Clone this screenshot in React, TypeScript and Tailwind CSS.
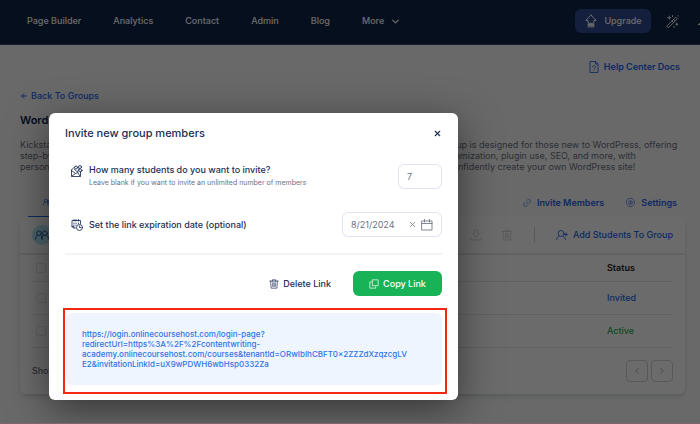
import { useState } from "react";
import type { ReactNode } from "react";
import { FiArrowLeft, FiChevronDown, FiChevronLeft, FiChevronRight, FiX } from "react-icons/fi";

type TIconProps = {
  className?: string;
  children: ReactNode;
};

// shared wrapper for the outline icons, drawn on a 24px grid
const Icon = ({ className = "size-3", children }: TIconProps) => (
  <svg
    className={className}
    viewBox="0 0 24 24"
    fill="none"
    stroke="currentColor"
    strokeWidth={1.7}
    strokeLinecap="round"
    strokeLinejoin="round"
    aria-hidden="true"
  >
    {children}
  </svg>
);

const TrashIcon = ({ className }: { className?: string }) => (
  <Icon className={className}>
    <path d="M2 5h20M8 5V2h8v3M4 5l1 17h14l1-17M9 9v9M12 9v9M15 9v9" />
  </Icon>
);

const UserIcon = ({ className }: { className?: string }) => (
  <Icon className={className}>
    <circle cx="10" cy="9" r="6" />
    <path d="M1 21c1-4 3-6 5-7M19 21c-1-4-3-6-5-7M20 8v6M17 11h6" />
  </Icon>
);

const UsersIcon = ({ className }: { className?: string }) => (
  <Icon className={className}>
    <circle cx="7" cy="9" r="4" />
    <circle cx="17" cy="9" r="4" />
    <path d="M1 19c0-3 1-5 3-7M12 19c0-3-1-5-2-7M12 19c0-3 1-5 2-7M23 19c0-3-1-5-3-7" />
  </Icon>
);

const navItems = ["Page Builder", "Analytics", "Contact", "Admin", "Blog"];

const students = [
  { id: 1, name: "Emma Carter", status: "Invited", color: "text-[#2563eb]" },
  { id: 2, name: "Noah Miller", status: "Active", color: "text-[#16b455]" },
];

const inviteUrl =
  "https://login.onlinecoursehost.com/login-page?redirectUrl=https%3A%2F%2Fcontentwriting-academy.onlinecoursehost.com/courses&tenantId=ORwIbIhCBFT0x2ZZZdXzqzcgLVE2&invitationLinkId=uX9wPDWH6wbHsp0332Za";

const Navbar = () => (
  <nav className="flex h-[45px] items-center overflow-hidden whitespace-nowrap border-b border-[#3b4a60] bg-[#0e2446] pb-0.5 pl-[27px] text-[9px] font-medium text-white">
    <div className="flex shrink-0 items-center gap-8">
      {navItems.map((item) => (
        <a key={item} href="#">
          {item}
        </a>
      ))}
      <button className="flex items-center gap-1.5">
        More
        <FiChevronDown size={11} strokeWidth={3} />
      </button>
    </div>
    <div className="-mr-3 ml-auto flex shrink-0 items-center gap-[15px]">
      <button className="flex h-6 w-[76px] items-center justify-center gap-1.5 rounded-md bg-[#2f4b8f]">
        <Icon className="size-3.5">
          <path d="M12 2 3 11h4v5h10v-5h4L12 2ZM7 18h10M7 20h10M7 22h10" />
        </Icon>
        Upgrade
      </button>
      <button aria-label="Customize">
        <Icon className="size-[13px]">
          <path d="m2 20 12-12 3 3L5 23ZM14 8l4-4 3 3-4 4M11 11l3 3M6 2v6M3 5h6M20 15v4M18 17h4M12 1v2M15 21v2M22 1v1" />
        </Icon>
      </button>
      <button aria-label="Notifications" className="ml-1">
        <Icon className="size-3.5">
          <path d="M1 18h22l-4-4v-4a7 7 0 0 0-14 0v4l-4 4ZM10 22h4" />
        </Icon>
      </button>
    </div>
  </nav>
);

const GroupPage = () => (
  <div className="pb-[29px] pl-5 pr-[15px]">
    <div className="flex h-11 items-center justify-end pr-[5px]">
      <a href="#" className="flex items-center gap-1 text-[9px] font-semibold text-[#2563eb]">
        <Icon>
          <path d="M15 1H4v22h16V6l-5-5ZM15 1v5h5M9 12c0-4 6-4 6 0 0 2-3 2-3 4M12 19v.1" />
        </Icon>
        Help Center Docs
      </a>
    </div>

    <a href="#" className="flex h-3.5 w-fit items-center gap-[3px] text-[9px] font-medium text-[#2563eb]">
      <FiArrowLeft size={8} strokeWidth={3} />
      Back To Groups
    </a>

    <h1 className="mt-[9px] text-[11px] font-semibold leading-4 text-[#111c4e]">WordPress Beginners</h1>
    <p className="mt-[11px] whitespace-nowrap text-[9px] leading-[11px] text-[#6b7280]">
      Kickstart your web development journey with our carefully prepared beginner course. This friendly group is designed for those new to WordPress, offering
      <br />
      step-by-step guidance on installation, theme selection, dashboard and menus, page building, site customization, plugin use, SEO, and more, with
      <br />
      personal feedback and open live question sessions included and support at every stage, so you can confidently create your own WordPress site!
    </p>

    <div className="mt-6 flex h-[21px] items-center justify-between text-[9px] font-semibold text-[#2563eb]">
      <button className="ml-2 flex h-full w-20 items-center justify-center gap-1 border-b border-[#2563eb] pb-2 pl-1">
        <UsersIcon className="size-2.5" />
        Students
      </button>
      <div className="flex h-full items-start gap-[22px] pr-2">
        <button className="flex items-center gap-1.5">
          <Icon className="size-2">
            <path d="m9 15 6-6M10 6l3-3a5 5 0 0 1 8 8l-3 3M14 18l-3 3a5 5 0 0 1-8-8l3-3" />
          </Icon>
          Invite Members
        </button>
        <button className="flex items-center gap-1.5">
          <Icon className="size-[9px]">
            <path d="M8 1h8l7 8v6l-7 8H8l-7-8V9Z" />
            <circle cx="12" cy="12" r="5" />
            <path d="M12 10v4" />
          </Icon>
          Settings
        </button>
      </div>
    </div>

    <section className="rounded-md bg-white shadow-md">
      <div className="flex h-[38px] items-center justify-between border-b-2 border-gray-200 pl-3 pr-3">
        <div className="flex size-5 items-center justify-center rounded-full bg-[#b5eafa] text-[#1d5fa8]">
          <UsersIcon className="size-3.5" />
        </div>
        <div className="flex items-center text-[9px] font-medium text-[#2563eb]">
          <button aria-label="Download" className="text-gray-300">
            <Icon>
              <path d="M9 2h6v7h4l-7 7-7-7h4ZM1 17v5h22v-5" />
            </Icon>
          </button>
          <button aria-label="Delete" className="ml-[19px] text-gray-300">
            <TrashIcon className="size-3" />
          </button>
          <span className="mx-[21px] h-4 border-l border-gray-300" />
          <button className="flex items-center gap-[5px]">
            <UserIcon className="size-3" />
            Add Students To Group
          </button>
        </div>
      </div>

      <div className="px-3">
        <table className="w-full text-left text-[9px] text-gray-900">
          <thead>
            <tr className="h-[26px] border-b border-gray-200">
              <th className="pl-1">
                <input type="checkbox" aria-label="Select all" className="block size-2.5 appearance-none rounded-xs border border-gray-200" />
              </th>
              <th className="w-[66px] font-semibold">Status</th>
            </tr>
          </thead>
          <tbody>
            {students.map((student) => (
              <tr key={student.id} className="h-[33px] border-b border-gray-200">
                <td className="pl-1">
                  <input type="checkbox" aria-label={student.name} className="block size-2.5 appearance-none rounded-xs border border-gray-200" />
                </td>
                <td className={`font-medium ${student.color}`}>{student.status}</td>
              </tr>
            ))}
          </tbody>
        </table>

        <div className="flex h-[46px] items-center justify-between text-[9px] text-gray-600">
          <span>Showing 2</span>
          <div className="flex gap-[3px] text-gray-400">
            <button aria-label="Previous page" className="flex size-[22px] items-center justify-center rounded-sm border border-gray-300">
              <FiChevronLeft size={10} />
            </button>
            <button aria-label="Next page" className="flex size-[22px] items-center justify-center rounded-sm border border-gray-300">
              <FiChevronRight size={10} />
            </button>
          </div>
        </div>
      </div>
    </section>
  </div>
);

const InviteModal = () => {
  const [count, setCount] = useState("7");
  const [date, setDate] = useState("8/21/2024");

  return (
    <div
      role="dialog"
      aria-label="Invite new group members"
      className="w-[409px] rounded-md bg-white pb-1.5 text-[#1c2d56] shadow-[0_10px_40px_rgba(0,0,0,0.5)]"
    >
      <div className="flex h-10 items-center justify-between px-4">
        <h2 className="text-[11px] font-medium">Invite new group members</h2>
        <button aria-label="Close">
          <FiX size={9} strokeWidth={3} />
        </button>
      </div>

      <div className="px-4">
        <div className="mt-2.5 flex justify-between pl-1.5">
          <div className="flex gap-1.5">
            <Icon className="mt-0.5 size-3">
              <path d="M1 10v13h18V13M1 10l6-6M1 11l8 6 5-2M2 22l7-5M18 22l-4-6" />
              <circle cx="10" cy="5" r="3" />
              <circle cx="18" cy="4" r="3" />
              <circle cx="19" cy="11" r="3" />
              <path d="M7 9l6 5 3-7" />
            </Icon>
            <div>
              <label htmlFor="student-count" className="block text-[9px] font-medium leading-3.5">
                How many students do you want to invite?
              </label>
              <p className="text-[7px] leading-3 text-[#6b7280]">Leave blank if you want to invite an unlimited number of members</p>
            </div>
          </div>
          <input
            id="student-count"
            type="text"
            value={count}
            onChange={(e) => setCount(e.target.value)}
            className="mt-px h-[25px] w-11 rounded-md border border-[#dfe4ee] pl-2 text-[9px] text-[#6b7280]"
          />
        </div>

        <div className="mt-[23px] flex items-center justify-between pl-1.5">
          <label htmlFor="expiration" className="flex items-center gap-1.5 text-[9px] font-medium">
            <Icon>
              <path d="M9 18H5l-3-3V3h17v7M2 15h4v3M6 1v3M10 1v3M15 1v3M6 8v1M10 8v1M15 8v1M6 12v1M10 12v1" />
              <circle cx="17" cy="17" r="6" />
              <path d="M17 14v3h3" />
            </Icon>
            Set the link expiration date (optional)
          </label>
          <div className="flex h-[25px] w-[100px] items-center rounded-md border border-[#dfe4ee] px-2 text-[#6b7280]">
            <input
              id="expiration"
              type="text"
              value={date}
              onChange={(e) => setDate(e.target.value)}
              className="min-w-0 flex-1 text-[9px]"
            />
            <button aria-label="Clear date" onClick={() => setDate("")}>
              <FiX size={9} strokeWidth={2} />
            </button>
            <button aria-label="Open calendar" className="ml-1">
              <Icon>
                <path d="M2 4h20v18H2ZM2 9h20M7 1v5M17 1v5" />
              </Icon>
            </button>
          </div>
        </div>

        <hr className="mt-4 border-t-2 border-gray-100" />

        <div className="mt-4 flex items-center justify-end gap-[22px] text-[9px] font-medium">
          <button className="flex items-center gap-1">
            <TrashIcon className="size-2.5" />
            Delete Link
          </button>
          <button className="flex h-[25px] w-[89px] items-center justify-center gap-1 rounded-md bg-[#18b357] text-white">
            <Icon className="size-2.5">
              <path d="M9 2h13v14H9ZM6 7H2v15h14v-3" />
            </Icon>
            Copy Link
          </button>
        </div>
      </div>

      <div className="ml-3.5 mr-[11px] mt-3 border-2 border-[#f5270f] pb-[7px] pl-px pr-[3px] pt-[3px]">
        <div className="rounded-md bg-[#eef5ff] p-4">
          <a href={inviteUrl} className="block whitespace-nowrap text-[8px] font-medium leading-[10px] text-[#2f74e8]">
            https://login.onlinecoursehost.com/login-page?
            <br />
            redirectUrl=https%3A%2F%2Fcontentwriting-
            <br />
            academy.onlinecoursehost.com/courses&amp;tenantId=ORwIbIhCBFT0×2ZZZdXzqzcgLV
            <br />
            E2&amp;invitationLinkId=uX9wPDWH6wbHsp0332Za
          </a>
        </div>
      </div>
    </div>
  );
};

const App = () => (
  <div className="relative min-h-screen overflow-hidden border-b border-[#7d6668] bg-[#f9fafb] font-['Inter',sans-serif]">
    <Navbar />
    <GroupPage />
    <div className="absolute inset-0 flex items-start bg-black/58 pl-[49px] pt-[113px]">
      <InviteModal />
    </div>
  </div>
);

export default App;
